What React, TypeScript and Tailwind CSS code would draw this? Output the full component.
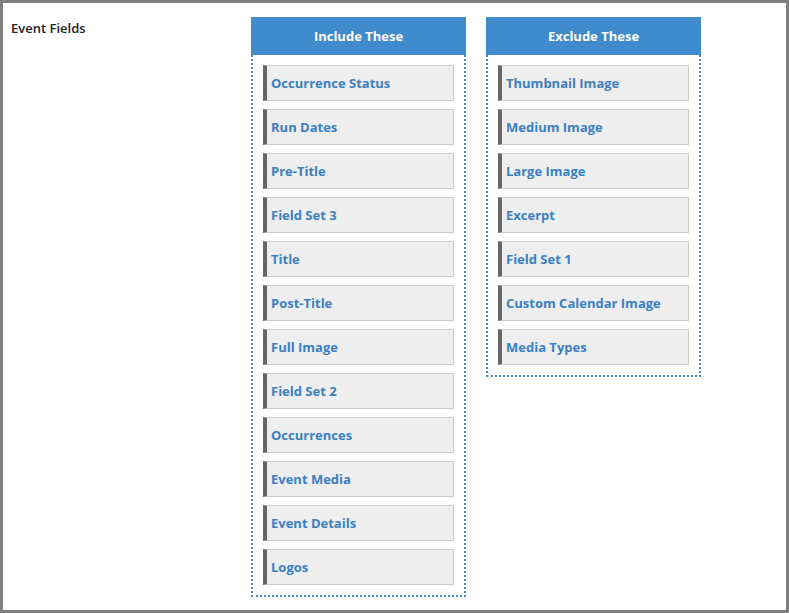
const include = [
  "Occurrence Status",
  "Run Dates",
  "Pre-Title",
  "Field Set 3",
  "Title",
  "Post-Title",
  "Full Image",
  "Field Set 2",
  "Occurrences",
  "Event Media",
  "Event Details",
  "Logos",
];

const exclude = [
  "Thumbnail Image",
  "Medium Image",
  "Large Image",
  "Excerpt",
  "Field Set 1",
  "Custom Calendar Image",
  "Media Types",
];

function FieldList({ title, items }: { title: string; items: string[] }) {
  return (
    <div className="w-[215px]">
      <div className="flex h-[38px] items-center justify-center bg-[#3f8bcb] pt-px text-[13px] font-bold text-white">
        {title}
      </div>
      <div className="flex flex-col gap-2 border-2 border-t-0 border-dotted border-[#3f8bcb] px-[10px] pb-[10px] pt-[10px]">
        {items.map((item) => (
          <div
            key={item}
            className="flex h-9 items-center border border-l-4 border-[#cccccc] border-l-[#666666] bg-[#eeeeee] pl-[4px] pt-[2px] text-[13px] font-bold text-[#3a80c2]"
          >
            {item}
          </div>
        ))}
      </div>
    </div>
  );
}

export default function App() {
  return (
    <div
      className="h-[613px] w-[789px] border-[3px] border-[#808080] bg-white"
      style={{ fontFamily: '"Open Sans", "Noto Sans", sans-serif' }}
    >
      <div className="flex pt-[14px]">
        <div className="w-[248px] pl-2 pt-[2px] text-[13px] font-semibold text-[#222222]">
          Event Fields
        </div>
        <div className="flex items-start gap-5">
          <FieldList title="Include These" items={include} />
          <FieldList title="Exclude These" items={exclude} />
        </div>
      </div>
    </div>
  );
}
